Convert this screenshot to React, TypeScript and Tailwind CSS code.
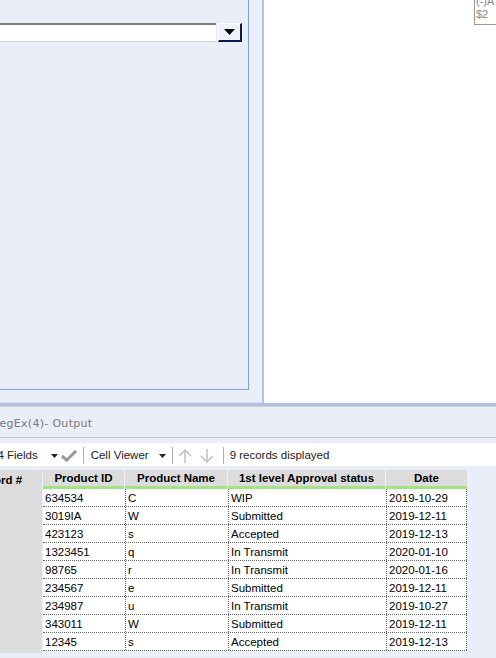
import React from "react";

const rows: [string, string, string, string][] = [
  ["634534", "C", "WIP", "2019-10-29"],
  ["3019IA", "W", "Submitted", "2019-12-11"],
  ["423123", "s", "Accepted", "2019-12-13"],
  ["1323451", "q", "In Transmit", "2020-01-10"],
  ["98765", "r", "In Transmit", "2020-01-16"],
  ["234567", "e", "Submitted", "2019-12-11"],
  ["234987", "u", "In Transmit", "2019-10-27"],
  ["343011", "W", "Submitted", "2019-12-11"],
  ["12345", "s", "Accepted", "2019-12-13"],
];

const cols = [
  { name: "Product ID", w: "w-[81px]" },
  { name: "Product Name", w: "w-[102px]" },
  { name: "1st level Approval status", w: "w-[157px]" },
  { name: "Date", w: "w-[81px]" },
];

function Tri() {
  return (
    <svg width="7" height="4" viewBox="0 0 7 4">
      <path d="M0 0H7L3.5 4Z" fill="#222" />
    </svg>
  );
}

export default function App() {
  return (
    <div
      className="w-[496px] h-[658px] overflow-hidden bg-[#e9eef8] flex flex-col text-[11px] text-black"
      style={{ fontFamily: '"Liberation Sans", Arial, sans-serif' }}
    >
      {/* top */}
      <div className="h-[403px] flex shrink-0">
        <div className="w-[262px] bg-[#e9eef8] flex flex-col">
          <div className="w-[249px] h-[390px] border-r border-b border-[#7f9fdf] pt-[23px]">
            <div className="flex items-start">
              <div className="w-[216px] h-[19px] bg-white border-t-2 border-t-[#808080] border-b border-b-[#d4d4d4]" />
              <div className="ml-[2px] w-[24px] h-[19px] bg-[#eef1f8] border border-t-white border-l-white border-r-[#0a1a4a] border-b-[#0a1a4a] border-r-2 border-b-2 flex items-center justify-center">
                <svg width="11" height="6" viewBox="0 0 11 6">
                  <path d="M0 0H11L5.5 6Z" fill="#000" />
                </svg>
              </div>
            </div>
          </div>
          <div className="flex-1 border-b border-[#dde0e6]" />
        </div>
        <div className="w-[2px] bg-[#b1c1e0]" />
        <div className="flex-1 bg-white relative">
          <div className="absolute left-[210px] top-0 w-[40px] h-[25px] border-l border-b border-[#9a9a9a] bg-white text-[#888] text-[11px] leading-[13px] pl-[1px] overflow-hidden">
            <div className="-mt-[5px]">(-)A</div>
            <div>$2</div>
          </div>
        </div>
      </div>
      <div className="h-[3px] bg-[#b1c1e0] shrink-0" />
      <div className="h-[1px] bg-[#cfcfcf] shrink-0" />
      {/* title */}
      <div className="h-[31px] flex items-center text-[#7a7a7a] shrink-0 border-b border-[#c8c8c8]" style={{ fontFamily: '"DejaVu Sans", sans-serif', fontSize: "11px" }}>
        <span className="-ml-[8px] pt-[5px] tracking-[0.3px]">RegEx(4)- Output</span>
      </div>
      {/* toolbar */}
      <div className="h-[5px] shrink-0 bg-[#e9eef8]" />
      <div className="h-[23px] bg-white flex items-center shrink-0 text-[11.5px] text-[#222] pt-[2px]">
        <span className="-ml-[9px]">34 Fields</span>
        <span className="ml-[13px] flex"><Tri /></span>
        <svg className="ml-[3px]" width="16" height="13" viewBox="0 0 17 13">
          <path d="M1 7L6 11.5L16 1.5" stroke="#9a9a9a" strokeWidth="3.2" fill="none" strokeLinejoin="round" />
        </svg>
        <div className="ml-[6px] w-px h-[17px] bg-[#b0b0b0]" />
        <span className="ml-[7px]">Cell Viewer</span>
        <span className="ml-[10px] flex"><Tri /></span>
        <div className="ml-[6px] w-px h-[17px] bg-[#b0b0b0]" />
        <svg className="ml-[5px]" width="14" height="16" viewBox="0 0 14 16">
          <path d="M7 15V2M1 8L7 2L13 8" stroke="#c4c4c4" strokeWidth="1.6" fill="none" />
        </svg>
        <svg className="ml-[8px]" width="14" height="16" viewBox="0 0 14 16">
          <path d="M7 1V14M1 8L7 14L13 8" stroke="#c4c4c4" strokeWidth="1.6" fill="none" />
        </svg>
        <div className="ml-[9px] w-px h-[17px] bg-[#b0b0b0]" />
        <span className="ml-[6px]">9 records displayed</span>
      </div>
      {/* table */}
      <div className="pt-[4px] flex">
        <div className="w-[42px] h-[183px] bg-[#dcdcdc] relative overflow-hidden">
          <div className="h-[19px] pt-[3px] flex items-center font-bold -ml-[27px] text-[11.5px] whitespace-nowrap">Record #</div>
        </div>
        <div className="ml-[1px] flex flex-col">
          <div className="flex h-[19px]">
            {cols.map((c, i) => (
              <div
                key={i}
                className={`${c.w} h-[19px] bg-[#dcdcdc] border-b-[3px] border-[#a4e384] font-bold flex items-center justify-center text-[11.5px] pt-[2px] ${i < 3 ? "mr-[1px]" : ""}`}
              >
                {c.name}
              </div>
            ))}
          </div>
          {rows.map((r, ri) => (
            <div key={ri} className="flex h-[18px] bg-white border-b border-dotted border-[#6a6a6a]">
              {r.map((v, ci) => (
                <div
                  key={ci}
                  className={`${ci === 0 ? "w-[82px]" : ci === 1 ? "w-[103px]" : ci === 2 ? "w-[158px]" : "w-[81px]"} ${ci > 0 ? "border-l border-dotted border-[#6a6a6a]" : ""} ${ci === 3 ? "border-r border-dotted border-[#6a6a6a]" : ""} px-[2px] pt-[3px] flex items-center whitespace-nowrap overflow-hidden text-[11.5px]`}
                >
                  {v}
                </div>
              ))}
            </div>
          ))}
        </div>
      </div>
    </div>
  );
}
